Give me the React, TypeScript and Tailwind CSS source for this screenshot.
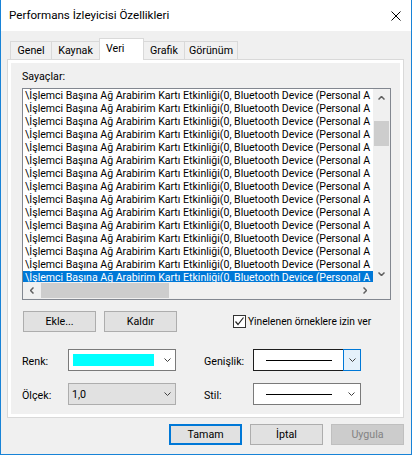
import React from "react";

const rowText = "\\İşlemci Başına Ağ Arabirim Kartı Etkinliği(0, Bluetooth Device (Personal A";

function Chev({ dir, color = "#606060", w = 1.5 }: { dir: "up" | "down" | "left" | "right"; color?: string; w?: number }) {
  if (dir === "up" || dir === "down") {
    const pts = dir === "down" ? "0.5,0.5 3.5,3.5 6.5,0.5" : "0.5,3.5 3.5,0.5 6.5,3.5";
    return (
      <svg width="7" height="4" viewBox="0 0 7 4" className="block">
        <polyline points={pts} fill="none" stroke={color} strokeWidth={w} />
      </svg>
    );
  }
  const pts = dir === "right" ? "0.5,0.5 3.5,3.5 0.5,6.5" : "3.5,0.5 0.5,3.5 3.5,6.5";
  return (
    <svg width="4" height="7" viewBox="0 0 4 7" className="block">
      <polyline points={pts} fill="none" stroke={color} strokeWidth={w} />
    </svg>
  );
}

function Tab({ label, w, selected }: { label: string; w: string; selected?: boolean }) {
  if (selected) {
    return (
      <div
        className={`${w} -ml-px -mb-px h-[22px] relative z-10 bg-white border border-b-0 border-[#d9d9d9] flex items-center pl-[6px] pb-[3px]`}
      >
        {label}
      </div>
    );
  }
  return (
    <div
      className={`${w} h-[18px] bg-[#f0f0f0] border border-b-0 border-[#d9d9d9] flex items-center justify-center`}
    >
      {label}
    </div>
  );
}

function Btn({ label, w = "w-[73px]", def, disabled }: { label: string; w?: string; def?: boolean; disabled?: boolean }) {
  const cls = def
    ? "border-2 border-[#0078d7] bg-[#e1e1e1] text-black"
    : disabled
    ? "border border-[#bfbfbf] bg-[#cccccc] text-[#838383]"
    : "border border-[#adadad] bg-[#e1e1e1] text-black";
  return <div className={`${w} h-[21px] flex items-center justify-center ${cls}`}>{label}</div>;
}

function Line() {
  return <div className="w-[66px] h-px bg-black" />;
}

export default function App() {
  const rows = Array.from({ length: 15 }, (_, i) => i);
  return (
    <div className="w-[412px] h-[455px] flex flex-col bg-[#f0f0f0] border-x border-b border-[#1883d7] font-['Roboto',sans-serif] text-[10.7px] leading-[13px] text-black overflow-hidden">
      {/* title bar */}
      <div className="h-[31px] shrink-0 bg-white flex items-center justify-between pl-[8px] pr-[10px]">
        <span className="text-[11.6px]">Performans İzleyicisi Özellikleri</span>
        <svg width="10" height="10" viewBox="0 0 10 10" className="block">
          <path d="M0.5 0.5 L9.5 9.5 M9.5 0.5 L0.5 9.5" stroke="#000" strokeWidth="1" fill="none" />
        </svg>
      </div>

      {/* tabs */}
      <div className="flex items-end h-[21px] mt-[7px] ml-[8px] shrink-0">
        <Tab label="Genel" w="w-[42px] ml-px" />
        <Tab label="Kaynak" w="w-[49px] -ml-px" />
        <Tab label="Veri" w="w-[45px]" selected />
        <Tab label="Grafik" w="w-[42px] -ml-px" />
        <Tab label="Görünüm" w="w-[54px] -ml-px" />
      </div>

      {/* panel */}
      <div className="ml-[6px] w-[397px] h-[359px] shrink-0 border border-[#d9d9d9] bg-white p-[3px]">
        <div className="h-full bg-[#f0f0f0] flex flex-col pl-[11px]">
          <div className="mt-[7px] h-[13px]">Sayaçlar:</div>

          {/* list box */}
          <div className="mt-[5px] w-[369px] h-[212px] border border-[#828790] bg-white flex flex-col">
            <div className="flex h-[193px]">
              <div className="w-[350px] overflow-hidden text-[10.55px]">
                {rows.map((i) => (
                  <div
                    key={i}
                    className={`h-[13px] pl-[2px] whitespace-nowrap ${
                      i === 14 ? "bg-[#0078d7] text-white" : ""
                    }`}
                  >
                    {rowText}
                  </div>
                ))}
              </div>
              <div className="w-[17px] bg-[#f0f0f0] flex flex-col">
                <div className="h-[17px] flex items-center justify-center">
                  <Chev dir="up" />
                </div>
                <div className="mt-[15px] h-[25px] mx-px bg-[#cdcdcd]" />
                <div className="flex-1" />
                <div className="h-[17px] flex items-center justify-center">
                  <Chev dir="down" />
                </div>
              </div>
            </div>
            <div className="flex h-[17px]">
              <div className="w-[350px] bg-[#f0f0f0] flex">
                <div className="w-[17px] flex items-center justify-center">
                  <Chev dir="left" />
                </div>
                <div className="ml-px w-[128px] my-px bg-[#cdcdcd]" />
                <div className="flex-1" />
                <div className="w-[17px] flex items-center justify-center">
                  <Chev dir="right" />
                </div>
              </div>
              <div className="w-[17px] bg-[#f0f0f0]" />
            </div>
          </div>

          {/* add / remove / checkbox */}
          <div className="mt-[11px] h-[21px] flex items-center ml-px">
            <Btn label="Ekle..." />
            <div className="ml-[8px]">
              <Btn label="Kaldır" />
            </div>
            <div className="ml-[56px] w-[13px] h-[13px] border border-[#333333] bg-white flex items-center justify-center">
              <svg width="11" height="11" viewBox="0 0 11 11" className="block">
                <polyline points="1.5,5.5 4,8.5 9.5,1.5" fill="none" stroke="#222222" strokeWidth="1.2" />
              </svg>
            </div>
            <span className="ml-[2px] text-[10.2px]">Yinelenen örneklere izin ver</span>
          </div>

          {/* Renk / Genişlik */}
          <div className="mt-[17px] h-[22px] flex items-start">
            <div className="w-[46px] mt-[6px]">Renk:</div>
            <div className="w-[108px] h-[22px] border border-[#7a7a7a] bg-white flex items-center justify-between pl-[4px] pr-[4px]">
              <div className="w-[81px] h-[12px] bg-[#00ffff]" />
              <Chev dir="down" color="#404040" w={1} />
            </div>
            <div className="ml-[28px] w-[49px] mt-[6px]">Genişlik:</div>
            <div className="w-[108px] h-[22px] border border-[#1e1e1e] bg-white flex">
              <div className="flex-1 flex items-center pl-[12px]">
                <Line />
              </div>
              <div className="w-[18px] -my-px -mr-px border border-[#0078d7] bg-[#e5f1fb] flex items-center justify-center">
                <Chev dir="down" color="#404040" w={1} />
              </div>
            </div>
          </div>

          {/* Ölçek / Stil */}
          <div className="mt-[12px] h-[22px] flex items-start">
            <div className="w-[46px] mt-[6px]">Ölçek:</div>
            <div className="w-[108px] h-[22px] border border-[#adadad] bg-[#e1e1e1] flex items-center justify-between pl-[3px] pr-[4px]">
              <span>1,0</span>
              <Chev dir="down" color="#404040" w={1} />
            </div>
            <div className="ml-[28px] w-[49px] mt-[6px]">Stil:</div>
            <div className="w-[108px] h-[22px] border border-[#7a7a7a] bg-white flex">
              <div className="flex-1 flex items-center pl-[12px]">
                <Line />
              </div>
              <div className="w-[17px] flex items-center justify-center">
                <Chev dir="down" color="#404040" w={1} />
              </div>
            </div>
          </div>
        </div>
      </div>

      {/* dialog buttons */}
      <div className="mt-[6px] flex justify-end gap-[8px] pr-[7px]">
        <Btn label="Tamam" def />
        <Btn label="İptal" />
        <Btn label="Uygula" disabled />
      </div>
    </div>
  );
}
